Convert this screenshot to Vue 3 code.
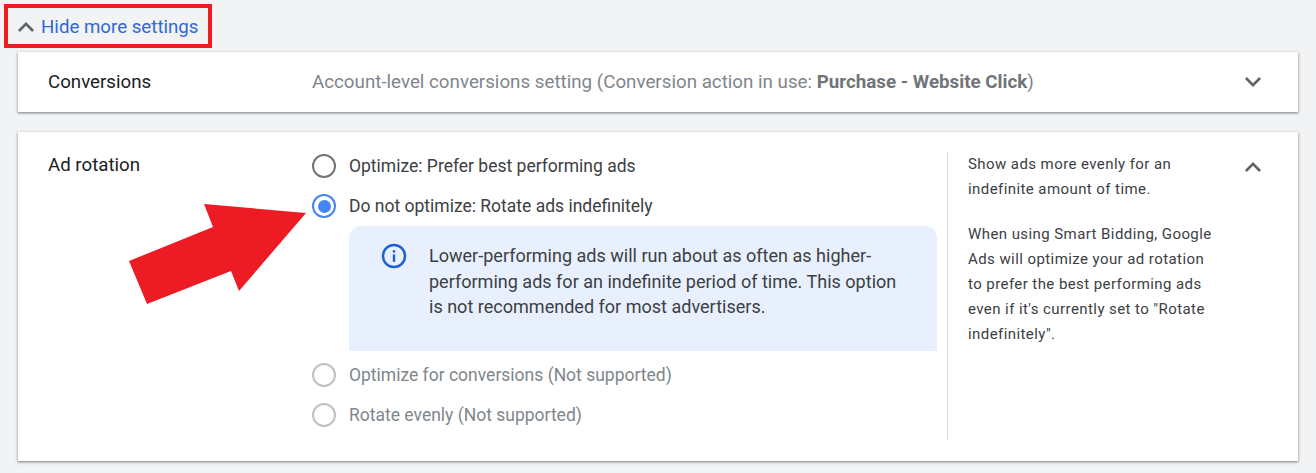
<script setup>
const help = ['Show ads more evenly for an indefinite amount of time.', 'When using Smart Bidding, Google Ads will optimize your ad rotation to prefer the best performing ads even if it\'s currently set to "Rotate indefinitely".']
</script>

<template>
  <div class="page">
    <div class="toggle">
      <svg class="chev" viewBox="6 8 12 7.41" width="16" height="10"><path d="M7.41 15.41 12 10.83l4.59 4.58L18 14l-6-6-6 6z" /></svg>
      <span>Hide more settings</span>
    </div>
    <section class="card conv">
      <div class="label">Conversions</div>
      <div class="summary">Account-level conversions setting (Conversion action in use: <b>Purchase - Website Click</b>)</div>
      <svg class="chev" viewBox="6 8.59 12 7.41" width="16" height="10"><path d="M7.41 8.59 12 13.17l4.59-4.58L18 10l-6 6-6-6z" /></svg>
    </section>
    <section class="card rot">
      <div class="label rlabel">Ad rotation</div>
      <div class="options">
        <div class="opt"><span class="radio"></span><span>Optimize: Prefer best performing ads</span></div>
        <div class="opt"><span class="radio on"></span><span>Do not optimize: Rotate ads indefinitely</span></div>
        <div class="info">
          <svg viewBox="0 0 26 26" width="26" height="26" class="i"><circle cx="13" cy="13" r="11" /><rect x="11.8" y="7.2" width="2.4" height="2.4" /><rect x="11.8" y="11.4" width="2.4" height="7.4" /></svg>
          <p>Lower-performing ads will run about as often as higher-performing ads for an indefinite period of time. This option is not recommended for most advertisers.</p>
        </div>
        <div class="opt dis"><span class="radio"></span><span>Optimize for conversions (Not supported)</span></div>
        <div class="opt dis"><span class="radio"></span><span>Rotate evenly (Not supported)</span></div>
      </div>
      <div class="help">
        <p v-for="t in help" :key="t">{{ t }}</p>
      </div>
      <svg class="chev rup" viewBox="6 8 12 7.41" width="16" height="10"><path d="M7.41 15.41 12 10.83l4.59 4.58L18 14l-6-6-6 6z" /></svg>
    </section>
    <div class="mark"></div>
    <svg class="arrow" viewBox="0 0 1316 473" width="1316" height="473"><polygon points="306,213 204,204 213,227 129,261 147,304 231,271 239,291" /></svg>
  </div>
</template>

<style>
html, body { margin: 0; background: #f1f3f4; }
</style>

<style scoped>
.page { position: relative; width: 1316px; height: 473px; overflow: hidden; background: #f1f3f4; font-family: Roboto, sans-serif; font-size: 16px; color: #3c4043; padding: 52px 18px 0; box-sizing: border-box; }
.toggle { position: absolute; left: 18px; top: 15px; display: flex; align-items: center; gap: 7px; color: #3367d6; font-size: 18.7px; line-height: 24px; }
.chev { fill: #5f6368; flex: none; }
.card { background: #fff; box-shadow: 0 1px 2px rgba(60,64,67,.55), 0 1px 3px 1px rgba(60,64,67,.12); }
.conv { height: 60px; display: flex; align-items: center; padding: 0 37px 0 30px; }
.label { width: 264px; flex: none; font-size: 18.7px; color: #202124; }
.summary { flex: 1; color: #80868b; font-size: 18.75px; }
.summary b { font-weight: 700; color: #70757a; }
.rot { margin-top: 20px; height: 329px; display: flex; padding: 20px 37px 21px 30px; box-sizing: border-box; align-items: flex-start; }
.rlabel { line-height: 26px; }
.options { width: 635px; flex: none; margin-top: -6px; }
.opt { height: 40px; display: flex; align-items: center; gap: 13px; font-size: 17.5px; color: #3c4043; }
.radio { width: 24px; height: 24px; box-sizing: border-box; border: 2px solid #70757a; border-radius: 50%; flex: none; position: relative; }
.radio.on { border-color: #4285f4; }
.radio.on::after { content: ""; position: absolute; inset: 3.5px; border-radius: 50%; background: #4285f4; }
.dis { color: #80868b; }
.dis .radio { border-color: #bdc1c6; }
.info { margin: 0 10px 4px 37px; height: 125px; box-sizing: border-box; background: #e8f0fd; border-radius: 12px 12px 0 0; display: flex; padding: 17px 28px 0 32px; gap: 22px; }
.i { flex: none; }
.i circle { fill: none; stroke: #1a5fd8; stroke-width: 2.4; }
.i rect { fill: #1a5fd8; }
.info p { margin: 0; font-size: 18.05px; line-height: 25.6px; color: #3c4043; }
.help { align-self: stretch; width: 298px; flex: none; border-left: 1px solid #dadce0; padding: 0 0 0 20px; box-sizing: border-box; font-size: 15px; line-height: 25px; letter-spacing: .42px; }
.help p { margin: 0 0 20px; width: 248px; }
.rup { margin-top: 10px; }
.mark { position: absolute; left: 4px; top: 4px; width: 208px; height: 44px; box-sizing: border-box; border: 4.5px solid #ed1c24; }
.arrow { position: absolute; left: 0; top: 0; }
.arrow polygon { fill: #ed1c24; }
</style>
